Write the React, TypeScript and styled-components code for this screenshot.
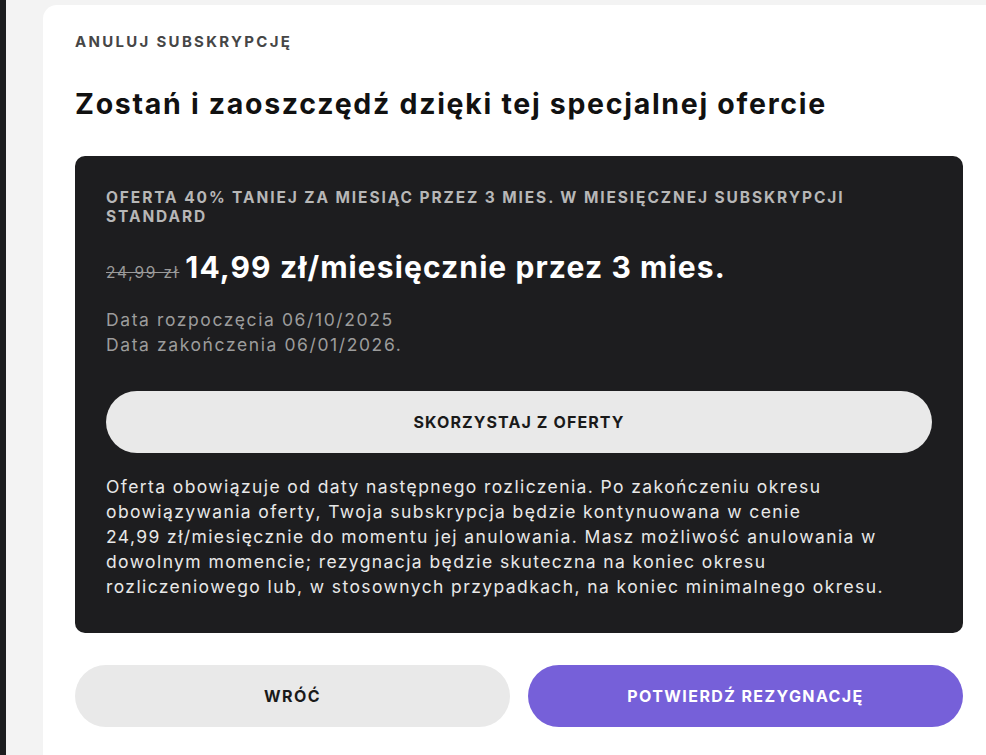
import styled, { createGlobalStyle } from 'styled-components'

const GlobalStyle = createGlobalStyle`
  html, body {
    margin: 0;
    padding: 0;
    background: #f3f3f3;
  }
  body {
    font-family: Inter, "Noto Sans", sans-serif;
    -webkit-font-smoothing: antialiased;
  }
`

const Screen = styled.div`
  display: flex;
  width: 986px;
  height: 755px;
  overflow: hidden;
  background: #f3f3f3;
`

const SideStrip = styled.div`
  width: 6px;
  flex-shrink: 0;
  background: #1c1d1f;
`

const Backdrop = styled.div`
  flex: 1;
  display: flex;
  padding: 5px 0 0 37px;
`

const Card = styled.section`
  flex: 1;
  background: #fff;
  border-radius: 14px 0 0 0;
  padding: 28px 0 0 32px;
  box-sizing: border-box;
`

const Inner = styled.div`
  width: 888px;
`

const Eyebrow = styled.div`
  font-size: 15px;
  font-weight: 700;
  color: #464646;
  letter-spacing: 2.3px;
  line-height: 18px;
`

const Title = styled.h1`
  margin: 35px 0 0;
  font-size: 28.5px;
  font-weight: 700;
  letter-spacing: 1.7px;
  line-height: 36px;
  color: #111;
`

const OfferBox = styled.div`
  margin-top: 34px;
  background: #1d1d1f;
  border-radius: 10px;
  padding: 32px 31px 34px 31px;
  color: #fff;
`

const OfferLabel = styled.div`
  font-size: 15.5px;
  font-weight: 700;
  color: #b7b7b7;
  line-height: 19px;
  letter-spacing: 1.9px;
  width: 790px;
`

const PriceRow = styled.div`
  display: flex;
  align-items: baseline;
  gap: 6px;
  margin-top: 23px;
`

const OldPrice = styled.s`
  font-size: 15.5px;
  color: #9a9a9a;
  letter-spacing: 1.8px;
`

const NewPrice = styled.span`
  font-size: 30px;
  font-weight: 700;
  letter-spacing: 1.1px;
  line-height: 36px;
`

const Dates = styled.div`
  margin-top: 22px;
  font-size: 17.5px;
  line-height: 25px;
  letter-spacing: 1.6px;
  color: #9c9c9c;
`

const PillButton = styled.button<{ $tone: 'light' | 'purple' }>`
  display: flex;
  align-items: center;
  justify-content: center;
  height: 62px;
  border: none;
  border-radius: 31px;
  font-family: inherit;
  font-size: 16px;
  font-weight: 700;
  letter-spacing: 1.4px;
  cursor: pointer;
  background: ${(p) => (p.$tone === 'purple' ? '#7660d9' : '#e9e9e9')};
  color: ${(p) => (p.$tone === 'purple' ? '#fff' : '#1a1a1a')};
`

const AcceptButton = styled(PillButton)`
  width: 100%;
  margin-top: 34px;
  letter-spacing: 1.1px;
`

const Terms = styled.p`
  margin: 21px 0 0;
  font-size: 17.5px;
  line-height: 25px;
  letter-spacing: 1.4px;
  color: #e8e8e8;
`

const Actions = styled.div`
  display: grid;
  grid-template-columns: 1fr 1fr;
  gap: 18px;
  margin-top: 32px;
`

export default function App() {
  return (
    <>
      <GlobalStyle />
      <Screen>
        <SideStrip />
        <Backdrop>
          <Card>
            <Inner>
              <Eyebrow>ANULUJ SUBSKRYPCJĘ</Eyebrow>
              <Title>Zostań i zaoszczędź dzięki tej specjalnej ofercie</Title>
              <OfferBox>
                <OfferLabel>
                  OFERTA 40% TANIEJ ZA MIESIĄC PRZEZ 3 MIES. W MIESIĘCZNEJ SUBSKRYPCJI STANDARD
                </OfferLabel>
                <PriceRow>
                  <OldPrice>24,99 zł</OldPrice>
                  <NewPrice>14,99 zł/miesięcznie przez 3 mies.</NewPrice>
                </PriceRow>
                <Dates>
                  Data rozpoczęcia 06/10/2025
                  <br />
                  Data zakończenia 06/01/2026.
                </Dates>
                <AcceptButton $tone="light">SKORZYSTAJ Z OFERTY</AcceptButton>
                <Terms>
                  Oferta obowiązuje od daty następnego rozliczenia. Po zakończeniu okresu
                  <br />
                  obowiązywania oferty, Twoja subskrypcja będzie kontynuowana w cenie
                  <br />
                  24,99 zł/miesięcznie do momentu jej anulowania. Masz możliwość anulowania w
                  <br />
                  dowolnym momencie; rezygnacja będzie skuteczna na koniec okresu
                  <br />
                  rozliczeniowego lub, w stosownych przypadkach, na koniec minimalnego okresu.
                </Terms>
              </OfferBox>
              <Actions>
                <PillButton $tone="light">WRÓĆ</PillButton>
                <PillButton $tone="purple">POTWIERDŹ REZYGNACJĘ</PillButton>
              </Actions>
            </Inner>
          </Card>
        </Backdrop>
      </Screen>
    </>
  )
}
